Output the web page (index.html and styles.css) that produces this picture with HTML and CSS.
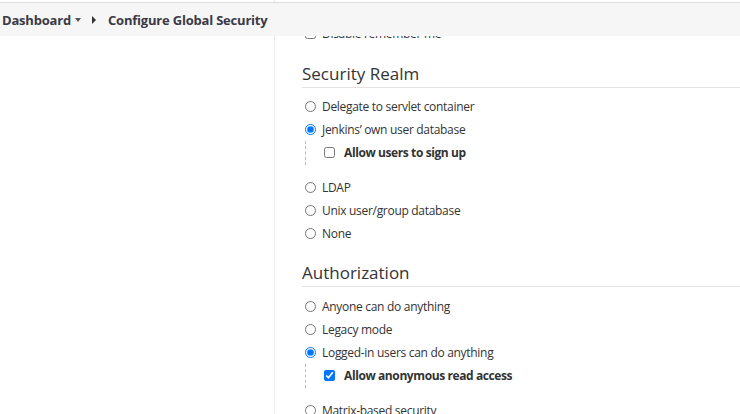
FILE: index.html
```html
<!DOCTYPE html>
<html lang="en">
<head>
<meta charset="utf-8">
<title>Configure Global Security</title>
<link rel="stylesheet" href="styles.css">
</head>
<body>
<header class="topbar">
  <nav class="crumbs">
    <span class="crumb">Dashboard</span>
    <span class="caret"></span>
    <span class="sep"></span>
    <span class="crumb">Configure Global Security</span>
  </nav>
</header>
<div class="page">
  <aside class="side"></aside>
  <main class="main">
    <label class="row"><input type="checkbox"> <span>Disable remember me</span></label>

    <h2 class="section">Security Realm</h2>
    <label class="row"><input type="radio" name="realm"> <span>Delegate to servlet container</span></label>
    <label class="row"><input type="radio" name="realm" checked> <span>Jenkins’ own user database</span></label>
    <div class="nested">
      <label class="row sub"><input type="checkbox"> <span>Allow users to sign up</span></label>
    </div>
    <label class="row"><input type="radio" name="realm"> <span>LDAP</span></label>
    <label class="row"><input type="radio" name="realm"> <span>Unix user/group database</span></label>
    <label class="row"><input type="radio" name="realm"> <span>None</span></label>

    <h2 class="section second">Authorization</h2>
    <label class="row"><input type="radio" name="authz"> <span>Anyone can do anything</span></label>
    <label class="row"><input type="radio" name="authz"> <span>Legacy mode</span></label>
    <label class="row"><input type="radio" name="authz" checked> <span>Logged-in users can do anything</span></label>
    <div class="nested">
      <label class="row sub"><input type="checkbox" checked> <span>Allow anonymous read access</span></label>
    </div>
    <label class="row"><input type="radio" name="authz"> <span>Matrix-based security</span></label>
  </main>
</div>
</body>
</html>
```

FILE: styles.css
```css
html, body {
  margin: 0;
  padding: 0;
  background: #fff;
  overflow: hidden;
}
body {
  font-family: "Open Sans", "Noto Sans", sans-serif;
  color: #333;
  width: 740px;
  height: 414px;
}
.topbar {
  position: absolute;
  top: 2px;
  left: 0;
  right: 0;
  height: 33px;
  background: #f6f6f6;
  border-top: 1px solid #dcdcdc;
  z-index: 5;
  display: flex;
  align-items: center;
}
.crumbs {
  display: flex;
  align-items: center;
  padding-left: 2px;
  font-size: 13px;
  font-weight: 700;
  letter-spacing: -0.2px;
  color: #3a3a45;
}
.caret {
  width: 0;
  height: 0;
  border-left: 3.5px solid transparent;
  border-right: 3.5px solid transparent;
  border-top: 4px solid #555;
  margin-left: 4px;
  margin-top: 1px;
}
.sep {
  width: 0;
  height: 0;
  border-top: 4px solid transparent;
  border-bottom: 4px solid transparent;
  border-left: 4px solid #333;
  margin-left: 11px;
  margin-right: 12px;
}
.page {
  display: flex;
  min-height: 414px;
}
.side {
  width: 274px;
  flex: none;
  border-right: 1px solid #ececec;
}
.main {
  flex: 1;
  padding: 22px 0 0 27px;
}
.row {
  display: flex;
  align-items: center;
  height: 23px;
  font-size: 12px;
  letter-spacing: -0.3px;
  gap: 6px;
}
.row input {
  margin: 0 0 0 3px;
  width: 11px;
  height: 11px;
  accent-color: #0075ff;
}
.section {
  font-size: 17px;
  font-weight: 500;
  line-height: 24px;
  margin: 17px 0 7px;
  padding-bottom: 1px;
  border-bottom: 1px solid #e3e3e3;
  color: #333;
}
.section.second {
  margin-top: 16px;
  margin-bottom: 8px;
}
.nested {
  margin-left: 3px;
  border-left: 1px dashed #bbb;
  padding: 0 0 1px 18px;
  margin-bottom: 11px;
}
.row.sub {
  font-weight: 700;
  letter-spacing: -0.4px;
  gap: 9px;
}
.row.sub input {
  margin-left: 0;
}
```
